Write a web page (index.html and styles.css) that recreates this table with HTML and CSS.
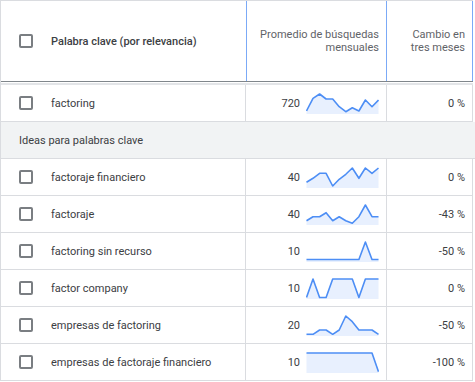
FILE: index.html
```html
<!DOCTYPE html>
<html lang="es">
<head>
<meta charset="utf-8">
<link rel="stylesheet" href="styles.css">
</head>
<body>
<div class="table">
  <div class="head">
    <div class="hcell hkw"><span class="cb"></span><span class="htitle">Palabra clave (por relevancia)</span></div>
    <div class="hcell hnum">Promedio de búsquedas<br>mensuales</div>
    <div class="hcell hnum">Cambio en<br>tres meses</div>
  </div>
  <div class="headline"></div>

  <div class="row">
    <div class="cell kw"><span class="cb"></span><span>factoring</span></div>
    <div class="cell vol"><span>720</span>
      <svg class="spark" width="73" height="21" viewBox="0 0 73 21"><polygon class="area" points="0.5,21 0.5,18 7,5.3 13.6,1 20.1,6 26.7,6 33.2,13.7 39.8,18.7 46.3,14.7 52.9,18 59.4,7 66,13.7 72.5,7 72.5,21"/><polyline class="line" points="0.5,18 7,5.3 13.6,1 20.1,6 26.7,6 33.2,13.7 39.8,18.7 46.3,14.7 52.9,18 59.4,7 66,13.7 72.5,7"/></svg>
    </div>
    <div class="cell pct">0 %</div>
  </div>

  <div class="group">Ideas para palabras clave</div>

  <div class="row">
    <div class="cell kw"><span class="cb"></span><span>factoraje financiero</span></div>
    <div class="cell vol"><span>40</span>
      <svg class="spark" width="73" height="21" viewBox="0 0 73 21"><polygon class="area" points="0.5,21 0.5,15.3 7,11.3 13.6,6.3 20.1,6.3 26.7,19 33.2,12.3 39.8,7.3 46.3,1 52.9,11.3 59.4,1 66,6.3 72.5,1 72.5,21"/><polyline class="line" points="0.5,15.3 7,11.3 13.6,6.3 20.1,6.3 26.7,19 33.2,12.3 39.8,7.3 46.3,1 52.9,11.3 59.4,1 66,6.3 72.5,1"/></svg>
    </div>
    <div class="cell pct">0 %</div>
  </div>

  <div class="row">
    <div class="cell kw"><span class="cb"></span><span>factoraje</span></div>
    <div class="cell vol"><span>40</span>
      <svg class="spark" width="73" height="21" viewBox="0 0 73 21"><polygon class="area" points="0.5,21 0.5,16.7 7,12.7 13.6,12.7 20.1,8.7 26.7,16.7 33.2,12.7 39.8,16.7 46.3,19.3 52.9,12.7 59.4,1 66,12.7 72.5,12.7 72.5,21"/><polyline class="line" points="0.5,16.7 7,12.7 13.6,12.7 20.1,8.7 26.7,16.7 33.2,12.7 39.8,16.7 46.3,19.3 52.9,12.7 59.4,1 66,12.7 72.5,12.7"/></svg>
    </div>
    <div class="cell pct">-43 %</div>
  </div>

  <div class="row">
    <div class="cell kw"><span class="cb"></span><span>factoring sin recurso</span></div>
    <div class="cell vol"><span>10</span>
      <svg class="spark" width="73" height="21" viewBox="0 0 73 21"><polygon class="area" points="0.5,21 0.5,18.5 7,18.5 13.6,18.5 20.1,18.5 26.7,18.5 33.2,18.5 39.8,18.5 46.3,18.5 52.9,18.5 59.4,1 66,18.5 72.5,18.5 72.5,21"/><polyline class="line" points="0.5,18.5 7,18.5 13.6,18.5 20.1,18.5 26.7,18.5 33.2,18.5 39.8,18.5 46.3,18.5 52.9,18.5 59.4,1 66,18.5 72.5,18.5"/></svg>
    </div>
    <div class="cell pct">-50 %</div>
  </div>

  <div class="row">
    <div class="cell kw"><span class="cb"></span><span>factor company</span></div>
    <div class="cell vol"><span>10</span>
      <svg class="spark" width="73" height="21" viewBox="0 0 73 21"><polygon class="area" points="0.5,21 0.5,19.5 7,1 13.6,19.5 20.1,19.5 26.7,1 33.2,1 39.8,1 46.3,1 52.9,19.5 59.4,1 66,1 72.5,1 72.5,21"/><polyline class="line" points="0.5,19.5 7,1 13.6,19.5 20.1,19.5 26.7,1 33.2,1 39.8,1 46.3,1 52.9,19.5 59.4,1 66,1 72.5,1"/></svg>
    </div>
    <div class="cell pct">0 %</div>
  </div>

  <div class="row">
    <div class="cell kw"><span class="cb"></span><span>empresas de factoring</span></div>
    <div class="cell vol"><span>20</span>
      <svg class="spark" width="73" height="21" viewBox="0 0 73 21"><polygon class="area" points="0.5,21 0.5,19.3 7,19.3 13.6,15 20.1,15 26.7,19.3 33.2,15 39.8,1 46.3,6.7 52.9,15 59.4,15 66,15 72.5,19.3 72.5,21"/><polyline class="line" points="0.5,19.3 7,19.3 13.6,15 20.1,15 26.7,19.3 33.2,15 39.8,1 46.3,6.7 52.9,15 59.4,15 66,15 72.5,19.3"/></svg>
    </div>
    <div class="cell pct">-50 %</div>
  </div>

  <div class="row">
    <div class="cell kw"><span class="cb"></span><span>empresas de factoraje financiero</span></div>
    <div class="cell vol"><span>10</span>
      <svg class="spark" width="73" height="21" viewBox="0 0 73 21"><polygon class="area" points="0.5,21 0.5,1 7,1 13.6,1 20.1,1 26.7,1 33.2,1 39.8,1 46.3,1 52.9,1 59.4,1 66,1 72.5,19.7 72.5,21"/><polyline class="line" points="0.5,1 7,1 13.6,1 20.1,1 26.7,1 33.2,1 39.8,1 46.3,1 52.9,1 59.4,1 66,1 72.5,19.7"/></svg>
    </div>
    <div class="cell pct">-100 %</div>
  </div>
</div>
</body>
</html>
```

FILE: styles.css
```css
* { box-sizing: border-box; }

body {
  margin: 0;
  background: #ffffff;
  font-family: Roboto, "Liberation Sans", sans-serif;
  font-size: 11px;
  color: #3c4043;
}

.table {
  width: 473px;
  border-top: 1px solid #dadce0;
  border-left: 1px solid #dadce0;
}

.head {
  display: grid;
  grid-template-columns: 246px 140px 86px;
  height: 80px;
}

.hcell {
  border-right: 1px solid #7baaf7;
  display: flex;
  align-items: center;
}

.hkw {
  padding-left: 18px;
  gap: 18px;
}

.htitle {
  font-weight: 500;
  color: #3c4043;
}

.hnum {
  justify-content: flex-end;
  text-align: right;
  padding-right: 7px;
  color: #5f6368;
  line-height: 13px;
}

.headline {
  height: 4px;
  border-top: 1px solid #80868b;
  border-bottom: 2px solid #e3e5e8;
}

.row {
  display: grid;
  grid-template-columns: 245px 141px 86px;
  height: 37px;
  border-bottom: 1px solid #dadce0;
}

.cell {
  border-right: 1px solid #dadce0;
  display: flex;
  align-items: center;
  color: #3c4043;
}

.kw {
  padding-left: 18px;
  gap: 18px;
}

.vol {
  justify-content: flex-end;
  padding-right: 7px;
  gap: 6px;
}

.pct {
  justify-content: flex-end;
  padding-right: 7px;
}

.cb {
  width: 14px;
  height: 14px;
  border: 2px solid #7a7e82;
  border-radius: 2px;
  flex: none;
}

.group {
  width: 474px;
  height: 37px;
  background: #f1f3f4;
  border-bottom: 1px solid #dadce0;
  display: flex;
  align-items: center;
  padding-left: 18px;
  color: #3c4043;
}

.spark {
  display: block;
  align-self: flex-start;
  margin-top: 8px;
}

.area {
  fill: #e8f0fe;
  stroke: none;
}

.line {
  fill: none;
  stroke: #4d8ef5;
  stroke-width: 1.6;
  stroke-linejoin: round;
}
```
